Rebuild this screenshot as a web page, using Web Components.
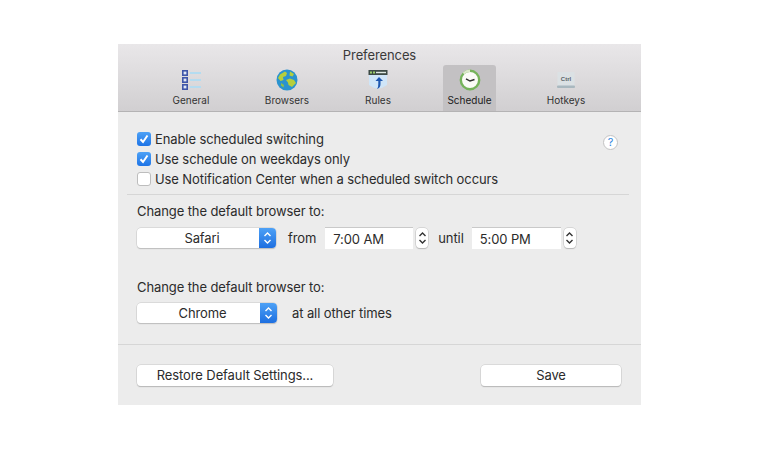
<!doctype html>
<html>
<head>
<meta charset="utf-8">
<title>Preferences</title>
<style>
  html, body { margin: 0; background: #fff; }
  body { padding: 44px 0 0 118px; font: 13px/16px Inter, "Liberation Sans", sans-serif; letter-spacing: -0.1px; color: #2b2b2b; }
</style>
</head>
<body>
<pref-window>
  <pref-toolbar slot="toolbar" title="Preferences">
    <pref-tab label="General" width="96">
      <svg width="24" height="22" viewBox="0 0 24 22">
        <g fill="#dfe6f5" stroke="#3f55a8" stroke-width="1.6">
          <rect x="3.8" y="1.8" width="4.4" height="4.4"/>
          <rect x="3.8" y="8.8" width="4.4" height="4.4"/>
          <rect x="3.8" y="15.8" width="4.4" height="4.4"/>
        </g>
        <g fill="#b4dcf0">
          <rect x="11" y="3" width="11" height="2"/>
          <rect x="11" y="10" width="11" height="2"/>
          <rect x="11" y="17" width="11" height="2"/>
        </g>
      </svg>
    </pref-tab>
    <pref-tab label="Browsers" width="96">
      <svg width="24" height="22" viewBox="0 0 24 22">
        <circle cx="12" cy="11" r="10.5" fill="#2a93cf"/>
        <path d="M5 5.5 L10 2.5 L12 4 L11 7 L8 8 L8.500 11 L5.500 12 L3 9Z" fill="#b6cf3c"/>
        <path d="M15 2.500 L19 5 L17.500 7.500 L14.500 6.500Z" fill="#b6cf3c"/>
        <path d="M11 11 L15 9.500 L19 11 L21 14 L17 18 L13.500 16 L13 13.500Z" fill="#b6cf3c"/>
        <path d="M6 14 L9 16 L8.500 18.500 L6 16.500Z" fill="#8fc04a"/>
      </svg>
    </pref-tab>
    <pref-tab label="Rules" width="86">
      <svg width="24" height="22" viewBox="0 0 24 22">
        <path d="M3 3 H21 V16 Q12 23 3 16Z" fill="#cfe5f8"/>
        <rect x="2.500" y="1" width="19" height="5" fill="#3d4a45"/>
        <rect x="4" y="2.500" width="2" height="2" fill="#9ccf6a"/>
        <rect x="7" y="2.500" width="2" height="2" fill="#9ccf6a"/>
        <rect x="10" y="2.800" width="10" height="1.400" fill="#dfe8e2"/>
        <path d="M13 8 L17 12 H14.500 V15 Q14.500 19 11 20 Q12.500 18 12.300 15 V12 H9.500Z" fill="#1d57b0"/>
      </svg>
    </pref-tab>
    <pref-tab label="Schedule" width="97" active>
      <svg width="24" height="24" viewBox="0 0 24 24">
        <circle cx="12" cy="12" r="9.200" fill="#fbfbf6" stroke="#76b35a" stroke-width="2.400"/>
        <path d="M5.500 5.500 A9.200 9.200 0 0 1 12 2.800" fill="none" stroke="#dbe8c9" stroke-width="2.400"/>
        <path d="M8 10.800 L12 13 L16.500 11.500" fill="none" stroke="#2b2b2b" stroke-width="1.400"/>
      </svg>
    </pref-tab>
    <pref-tab label="Hotkeys" width="96">
      <svg width="24" height="22" viewBox="0 0 24 22">
        <rect x="3.500" y="3" width="17" height="14" fill="#dbe1e4"/>
        <rect x="3" y="16.500" width="18" height="2.500" rx="1" fill="#a9b8bf"/>
        <text x="12" y="12" text-anchor="middle" font-family="Liberation Sans, sans-serif" font-size="6" font-weight="700" letter-spacing="0" fill="#5a6368">Ctrl</text>
      </svg>
    </pref-tab>
  </pref-toolbar>

  <pref-section kind="checks">
    <help-button></help-button>
    <pref-check checked>Enable scheduled switching</pref-check>
    <pref-check checked>Use schedule on weekdays only</pref-check>
    <pref-check>Use Notification Center when a scheduled switch occurs</pref-check>
  </pref-section>
  <pref-divider inset></pref-divider>
  <pref-section kind="rows">
    <pref-row first>
      <span slot="label">Change the default browser to:</span>
      <pref-select width="139">Safari</pref-select>
      <pref-text gap="12">from</pref-text>
      <time-field gap="9" width="88">7:00 AM</time-field>
      <pref-text gap="10">until</pref-text>
      <time-field gap="8" width="89">5:00 PM</time-field>
    </pref-row>
    <pref-row>
      <span slot="label">Change the default browser to:</span>
      <pref-select width="140">Chrome</pref-select>
      <pref-text gap="15">at all other times</pref-text>
    </pref-row>
  </pref-section>
  <pref-divider></pref-divider>
  <pref-footer>
    <pref-button width="196">Restore Default Settings...</pref-button>
    <pref-button width="140">Save</pref-button>
  </pref-footer>
</pref-window>

<script>
  function shadow(el, html) {
    el.attachShadow({ mode: "open" }).innerHTML = html;
    return el.shadowRoot;
  }

  const stepperArrows = `<svg width="9" height="14" viewBox="0 0 9 14" fill="none" stroke-width="1.400">
    <path d="M1.500 5 L4.500 2 L7.500 5"/><path d="M1.500 9 L4.500 12 L7.500 9"/></svg>`;

  class PrefWindow extends HTMLElement {
    connectedCallback() {
      shadow(this, `<style>
        :host { display: block; width: 523px; height: 361px; background: #ececec; box-sizing: border-box; }
      </style><slot name="toolbar"></slot><slot></slot>`);
    }
  }

  class PrefToolbar extends HTMLElement {
    connectedCallback() {
      shadow(this, `<style>
        :host { display: block; height: 68px; box-sizing: border-box;
          background: linear-gradient(#e9e7e9, #d1cfd1); border-bottom: 1px solid #b4b3b4; }
        h1 { margin: 0; height: 21px; font: inherit; line-height: 22px; text-align: center; color: #3a3a3a; }
        nav { display: flex; padding-left: 25px; height: 46px; }
      </style><h1>${this.getAttribute("title")}</h1><nav><slot></slot></nav>`);
    }
  }

  class PrefTab extends HTMLElement {
    connectedCallback() {
      shadow(this, `<style>
        :host { display: flex; justify-content: center; width: ${this.getAttribute("width")}px; }
        div { display: flex; flex-direction: column; align-items: center; width: 53px; height: 46px;
          border-radius: 3px 3px 0 0; font-size: 10px; letter-spacing: 0; color: #333; }
        :host([active]) div { background: #c3c1c3; color: #1c1c1c; }
        span.icon { display: flex; align-items: center; justify-content: center; height: 29px; }
        span.label { line-height: 13px; white-space: nowrap; }
      </style><div><span class="icon"><slot></slot></span><span class="label">${this.getAttribute("label")}</span></div>`);
    }
  }

  class PrefSection extends HTMLElement {
    connectedCallback() {
      shadow(this, `<style>
        :host { display: block; position: relative; box-sizing: border-box; padding-left: 19px; }
        :host([kind="checks"]) { height: 82px; padding-top: 17px; }
        :host([kind="rows"]) { height: 149px; padding-top: 8px; }
      </style><slot></slot>`);
    }
  }

  class PrefCheck extends HTMLElement {
    connectedCallback() {
      const on = this.hasAttribute("checked");
      shadow(this, `<style>
        :host { display: flex; align-items: center; gap: 4px; height: 20px; white-space: nowrap; }
        i { display: flex; width: 14px; height: 14px; box-sizing: border-box; border-radius: 3px; }
        i.on { background: linear-gradient(#4da1f6, #1e74e6); }
        i.off { background: #fff; border: 1px solid #bdbdbd; }
      </style><i class="${on ? "on" : "off"}">${on ? `<svg width="14" height="14" viewBox="0 0 14 14"><path d="M3.500 7.300 L6 10 L10.500 3.500" fill="none" stroke="#fff" stroke-width="2"/></svg>` : ""}</i><slot></slot>`);
    }
  }

  class HelpButton extends HTMLElement {
    connectedCallback() {
      shadow(this, `<style>
        :host { position: absolute; left: 485px; top: 23px; width: 15px; height: 15px; box-sizing: border-box;
          display: flex; align-items: center; justify-content: center; border-radius: 50%;
          background: #fff; border: 1px solid #c3c3c3; color: #2f86e0; font-size: 11px; line-height: 13px; }
      </style>?`);
    }
  }

  class PrefDivider extends HTMLElement {
    connectedCallback() {
      shadow(this, `<style>
        :host { display: block; height: 1px; background: #d6d6d6; }
        :host([inset]) { margin: 0 12px 0 9px; }
      </style>`);
    }
  }

  class PrefRow extends HTMLElement {
    connectedCallback() {
      shadow(this, `<style>
        :host { display: block; height: 76px; }
        .label { height: 24px; line-height: 16px; }
        .controls { display: flex; align-items: center; height: 24px; margin-top: -2px; }
        :host([first]) .controls { margin-top: -1px; }
      </style><div class="label"><slot name="label"></slot></div><div class="controls"><slot></slot></div>`);
    }
  }

  class PrefSelect extends HTMLElement {
    connectedCallback() {
      shadow(this, `<style>
        :host { display: flex; width: ${this.getAttribute("width")}px; height: 20px; box-sizing: border-box;
          border-radius: 4px; overflow: hidden; background: #fff; box-shadow: 0 0 0 .5px #c8c8c8, 0 1px 1px #b5b5b5; }
        span { flex: 1; padding-left: 8px; text-align: center; line-height: 20px; }
        b { display: flex; align-items: center; justify-content: center; width: 17px;
          background: linear-gradient(#4da1f6, #1e6fe0); }
        svg { stroke: #fff; }
      </style><span><slot></slot></span><b>${stepperArrows}</b>`);
    }
  }

  class PrefText extends HTMLElement {
    connectedCallback() {
      shadow(this, `<style>
        :host { display: block; margin-left: ${this.getAttribute("gap")}px; white-space: nowrap; }
      </style><slot></slot>`);
    }
  }

  class TimeField extends HTMLElement {
    connectedCallback() {
      shadow(this, `<style>
        :host { display: flex; align-items: center; gap: 3px; margin-left: ${this.getAttribute("gap")}px; }
        span { display: block; box-sizing: border-box; width: ${this.getAttribute("width")}px; height: 22px;
          padding-left: 8px; line-height: 23px; background: #fff; border-top: 1px solid #c9c9c9; }
        b { display: flex; align-items: center; justify-content: center; width: 12px; height: 20px; box-sizing: border-box;
          background: #fff; border-radius: 4px; box-shadow: 0 0 0 .5px #c0c0c0, 0 1px 1px #b5b5b5; }
        svg { stroke: #333; }
      </style><span><slot></slot></span><b>${stepperArrows}</b>`);
    }
  }

  class PrefFooter extends HTMLElement {
    connectedCallback() {
      shadow(this, `<style>
        :host { display: flex; justify-content: space-between; padding: 20px 20px 0 19px; }
      </style><slot></slot>`);
    }
  }

  class PrefButton extends HTMLElement {
    connectedCallback() {
      shadow(this, `<style>
        :host { display: block; width: ${this.getAttribute("width")}px; height: 21px; text-align: center; line-height: 21px;
          background: #fff; border-radius: 4px; box-shadow: 0 0 0 .5px #c8c8c8, 0 1px 1px #aaa; white-space: nowrap; }
      </style><slot></slot>`);
    }
  }

  customElements.define("pref-window", PrefWindow);
  customElements.define("pref-toolbar", PrefToolbar);
  customElements.define("pref-tab", PrefTab);
  customElements.define("pref-section", PrefSection);
  customElements.define("pref-check", PrefCheck);
  customElements.define("help-button", HelpButton);
  customElements.define("pref-divider", PrefDivider);
  customElements.define("pref-row", PrefRow);
  customElements.define("pref-select", PrefSelect);
  customElements.define("pref-text", PrefText);
  customElements.define("time-field", TimeField);
  customElements.define("pref-footer", PrefFooter);
  customElements.define("pref-button", PrefButton);
</script>
</body>
</html>
